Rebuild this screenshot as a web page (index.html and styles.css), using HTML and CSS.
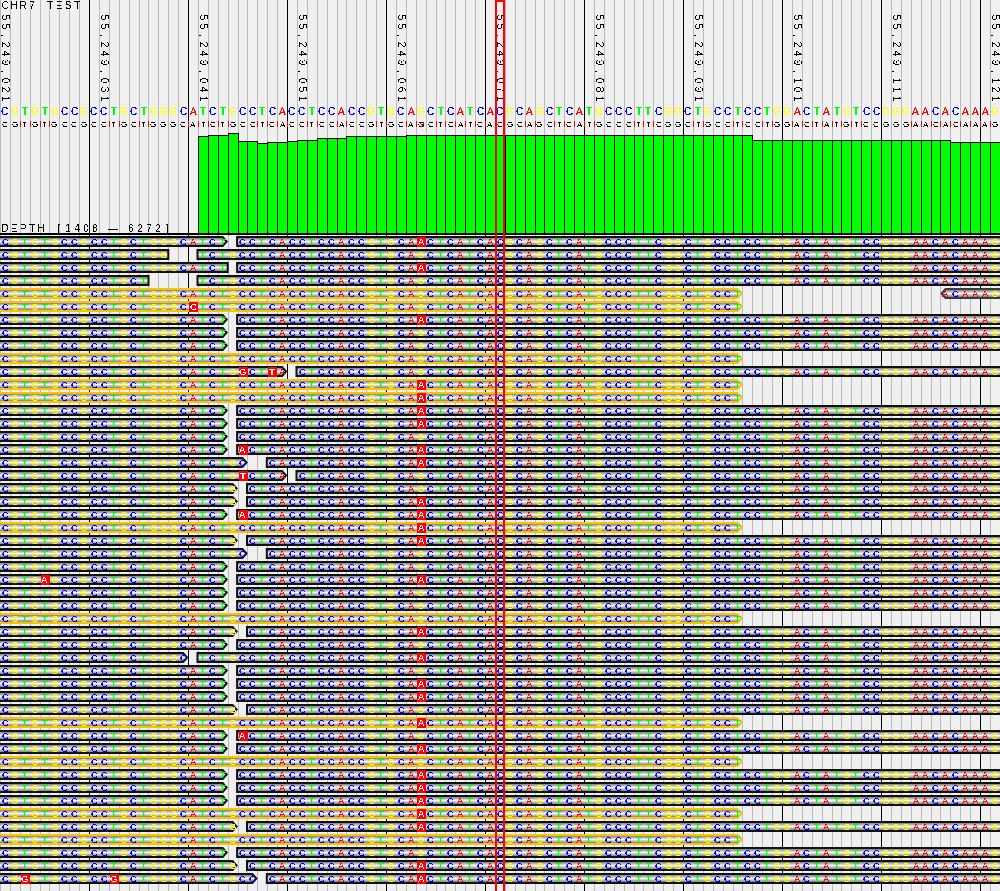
FILE: index.html
```html
<!DOCTYPE html>
<html lang="en">
<head>
<meta charset="utf-8">
<title>CHR7 TEST</title>
<link rel="stylesheet" href="styles.css">
</head>
<body>
<svg class="defs" width="0" height="0" aria-hidden="true">
  <defs>
    <filter id="crisp" x="0" y="0" width="100%" height="100%" filterUnits="objectBoundingBox" color-interpolation-filters="sRGB">
      <feComponentTransfer><feFuncA type="discrete" tableValues="0 1"/></feComponentTransfer>
    </filter>
    <filter id="crisp-base" x="0" y="0" width="100%" height="100%" filterUnits="objectBoundingBox" color-interpolation-filters="sRGB">
      <feComponentTransfer><feFuncA type="linear" slope="30" intercept="-12"/></feComponentTransfer>
    </filter>
    <linearGradient id="read-fill" x1="0" y1="0" x2="0" y2="1">
      <stop offset="0" stop-color="#606060"/>
      <stop offset="0.25" stop-color="#a8a8a8"/>
      <stop offset="0.5" stop-color="#f6f6f6"/>
      <stop offset="0.75" stop-color="#a8a8a8"/>
      <stop offset="1" stop-color="#606060"/>
    </linearGradient>
  </defs>
</svg>
<main class="viewer">
  <svg id="ruler" class="track track-ruler" width="1000" height="132"></svg>
  <svg id="depth" class="track track-depth" width="1000" height="104"></svg>
  <svg id="reads" class="track track-reads" width="1000" height="655"></svg>
  <div class="focus-column"></div>
</main>
<script src="app.js"></script>
</body>
</html>
```
FILE: styles.css
```css
html, body { margin: 0; padding: 0; background: #f0f0f0; }
.defs { position: absolute; }
.viewer { position: relative; display: flex; flex-direction: column; width: 1000px; height: 891px; overflow: hidden; background: #f0f0f0; }
.track { display: block; flex: none; }
.grid-line { stroke: #bbbbbb; stroke-width: 1; shape-rendering: crispEdges; }
.grid-major { stroke: #000000; }
.crisp { filter: url(#crisp); }
.crisp-base { filter: url(#crisp-base); }
.label { font-family: "Liberation Sans", sans-serif; font-size: 10px; fill: #000; text-anchor: middle; }
.tick-label { font-family: "Liberation Sans", sans-serif; font-size: 10px; fill: #000; text-anchor: middle; }
.ref-top { font-family: "Liberation Sans", sans-serif; font-size: 10px; }
.ref-low { font-family: "Liberation Sans", sans-serif; font-size: 8px; fill: #000; }
.ref-note { font-family: "Liberation Sans", sans-serif; font-size: 7px; fill: #f00; text-anchor: middle; }
.ref-tick { stroke: #ff0000; stroke-width: 1; shape-rendering: crispEdges; }
.focus-fill { fill: #ffe9f3; }
.bar { fill: #00ff00; stroke: #000; stroke-width: 1; shape-rendering: crispEdges; }
.depth-rule { fill: #000; }
.read { fill: url(#read-fill); stroke: #111; stroke-width: 2; }
.read-alt { stroke: #ffc000; }
.read-rev { stroke: #3a3a3a; }
.bases { font-family: "Liberation Sans", sans-serif; font-size: 9.6px; }
.base-a { fill: #ff0000; }
.base-c { fill: #0000ff; }
.base-g { fill: #ffff00; }
.base-t { fill: #00ff00; }
.miss-box { fill: #ff0000; shape-rendering: crispEdges; }
.miss-text { font-family: "Liberation Sans", sans-serif; font-size: 9.6px; fill: #fff; }
.focus-column { position: absolute; left: 495px; top: 0; width: 10px; height: 891px; box-sizing: border-box; border: 2px solid #ff0000; border-bottom: 0; }
```
FILE: app.js
```js
const SEQ = "CGTGTGCCGCCTGCTGGGCATCTGCCTCACCTCCACCGTGCAGCTCATCACGCAGCTCATGCCCTTCGGCTGCCTCCTGGACTATGTCCGGGAACACAAAG";
const COL = 9.9;
const center = c => COL * c + 5;
const WIDTH = { A: 0.667, C: 0.722, G: 0.778, T: 0.611 };
/* every glyph starts on a whole pixel, so each letter rasterises the same way */
const glyphX = (c, b, size) => Math.round(center(c) - (WIDTH[b] * size) / 2);

function gridLines(h) {
  let out = "";
  for (let k = 0; k <= 101; k++) {
    const x = Math.max(0, Math.round(COL * k - 0.1)) + 0.5;
    const cls = k % 10 === 9 ? "grid-line grid-major" : "grid-line";
    out += `<line class="${cls}" x1="${x}" x2="${x}" y1="0" y2="${h}"/>`;
  }
  return out;
}

/* fixed-pitch glyph positions for the spaced-out labels */
const pitch = (text, start) => [...text].map((_, i) => start + 9 * i).join(" ");

function drawRuler() {
  let s = `<rect class="focus-fill" x="496" y="0" width="8" height="132"/>` + gridLines(132);
  for (let k = 1; k < SEQ.length; k++) {
    if ("TA".includes(SEQ[k]) || "TA".includes(SEQ[k - 1])) {
      const x = Math.round(COL * k - 0.1) + 0.5;
      s += `<line class="ref-tick" x1="${x}" x2="${x}" y1="121" y2="127"/>`;
    }
  }
  s += `<g class="crisp">`;
  s += `<text class="label" x="${pitch("CHR7 TEST", 5)}" y="9">CHR7 TEST</text>`;
  for (let k = 0; k <= 10; k++) {
    const x = 2 + 99 * k;
    const label = "55,249," + String(21 + 10 * k).padStart(3, "0");
    s += `<text class="tick-label" transform="translate(${x},17.5) rotate(90)" x="${pitch(label, 0)}" y="0">${label}</text>`;
  }
  s += `<text class="ref-note" x="${center(42) + 1}" y="127">N</text>`;
  s += `</g><g class="crisp-base"><text class="ref-top">`;
  [...SEQ].forEach((b, c) => {
    s += `<tspan class="base-${b.toLowerCase()}" x="${glyphX(c, b, 10)}" y="115">${b}</tspan>`;
  });
  s += `</text><text class="ref-low">`;
  [...SEQ].forEach((b, c) => {
    s += `<tspan x="${glyphX(c, b, 8)}" y="127">${b}</tspan>`;
  });
  s += `</text></g>`;
  document.getElementById("ruler").innerHTML = s;
}

function depthTop(c) {
  if (c === 20) return 136;
  if (c === 21 || c === 22) return 135;
  if (c === 23) return 133;
  if (c === 24 || c === 25) return 141;
  if (c === 26) return 143;
  if (c === 27 || c === 28) return 142;
  if (c === 29) return 141;
  if (c === 30 || c === 31) return 140;
  if (c <= 34) return 138;
  if (c <= 40) return 136;
  if (c <= 75) return 135;
  if (c <= 95) return 140;
  return 142;
}

function drawDepth() {
  let s = gridLines(104);
  for (let c = 20; c <= 101; c++) {
    const x = Math.round(COL * c - 0.1) + 0.5;
    const x2 = Math.round(COL * (c + 1) - 0.1) + 0.5;
    const y = depthTop(c) - 132 + 0.5;
    s += `<rect class="bar" x="${x}" y="${y}" width="${x2 - x}" height="${102 - y}"/>`;
  }
  s += `<rect class="depth-rule" x="0" y="101" width="1000" height="2"/>`;
  const label = "DEPTH [1408 — 6272]";
  s += `<g class="crisp"><text class="label" x="${pitch(label, 5)}" y="100">${label}</text></g>`;
  document.getElementById("depth").innerHTML = s;
}

/* reads: last column of left read, first column of right read, mismatches */
const parse = m => (m ? m.split(" ").map(t => [parseInt(t, 10), t.slice(-1)]) : []);
const fwd = (l, r, m) => ({ l, r, m: parse(m), tip: true });
const flat = (l, r, m) => ({ l, r, m: parse(m), tip: false });
const alt = m => ({ alt: true, m: parse(m) });

const ROWS = [
  fwd(22,24,"42A"), flat(16,20), flat(22,24,"42A"), flat(14,20),
  { alt: true, m: [], rev: 95 }, alt("19C"),
  fwd(22,24,"42A"), fwd(22,24), fwd(22,24), alt(),
  fwd(28,30,"24G 27T"), alt("42A"), alt("42A"),
  fwd(22,24,"42A"), fwd(22,24,"42A"), fwd(22,24), fwd(22,24,"24A 42A"),
  fwd(24,27,"42A"), fwd(28,30,"24T"), fwd(23,25), fwd(23,25,"42A"),
  fwd(22,24,"24A 42A"), alt("42A"), fwd(23,25,"42A"), fwd(24,27),
  fwd(22,24), fwd(22,24,"4A 42A"), fwd(22,24), fwd(22,24), alt(),
  fwd(23,25,"42A"), fwd(22,24), fwd(18,20,"42A"), fwd(22,24),
  fwd(22,24,"42A"), fwd(22,24,"42A"), fwd(23,25), alt("42A"),
  fwd(22,24,"24A"), fwd(22,24,"42A"), alt(),
  fwd(22,24,"42A"), fwd(22,24,"42A"), fwd(22,24,"42A"), alt("42A"),
  fwd(23,25,"42A"), alt(), fwd(22,24), fwd(23,25,"42A"),
  fwd(25,27,"2G 11G 42A")
];

function shape(x0, x1, top, tip, cls) {
  const t = top + 1, b = top + 10, m = top + 5.5;
  let pts;
  if (tip === "right") pts = [[x0, t], [x1 - 5, t], [x1 - 1, m], [x1 - 5, b], [x0, b]];
  else if (tip === "left") pts = [[x0 + 5, t], [x1, t], [x1, b], [x0 + 5, b], [x0 + 1, m]];
  else pts = [[x0, t], [x1, t], [x1, b], [x0, b]];
  return `<polygon class="${cls}" points="${pts.map(p => p.join(",")).join(" ")}"/>`;
}

function letters(from, to, y, misses) {
  let s = `<text class="bases">`;
  for (let c = Math.max(from, 0); c <= Math.min(to, SEQ.length - 1); c++) {
    if (misses.some(m => m[0] === c)) continue;
    const b = SEQ[c];
    s += `<tspan class="base-${b.toLowerCase()}" x="${glyphX(c, b, 9.6)}" y="${y}">${b}</tspan>`;
  }
  return s + `</text>`;
}

function drawReads() {
  let shapes = gridLines(655), boxes = "", text = "";
  ROWS.forEach((row, i) => {
    const top = 13 * i;
    const base = top + 9;
    if (row.alt) {
      shapes += shape(-6, 742.5, top, "right", "read read-alt");
      text += letters(0, 74, base, row.m);
      if (row.rev) {
        shapes += shape(COL * row.rev, 1006, top, "left", "read read-rev");
        text += letters(row.rev, 100, base, []);
      }
    } else {
      const end = COL * (row.l + 1);
      const start = COL * row.r - 0.5;
      shapes += shape(-6, end, top, row.tip ? "right" : "flat", "read");
      shapes += shape(start, 1006, top, "flat", "read");
      text += letters(0, row.l, base, row.m);
      text += letters(row.r, 100, base, row.m);
    }
    row.m.forEach(([c, b]) => {
      boxes += `<rect class="miss-box" x="${Math.round(COL * c) + 0.5}" y="${top + 0.5}" width="9" height="10"/>`;
      text += `<text class="miss-text" x="${glyphX(c, b, 9.6)}" y="${base}">${b}</text>`;
    });
  });
  document.getElementById("reads").innerHTML =
    shapes + boxes + `<g class="crisp-base">${text}</g>`;
}

drawRuler();
drawDepth();
drawReads();
```
